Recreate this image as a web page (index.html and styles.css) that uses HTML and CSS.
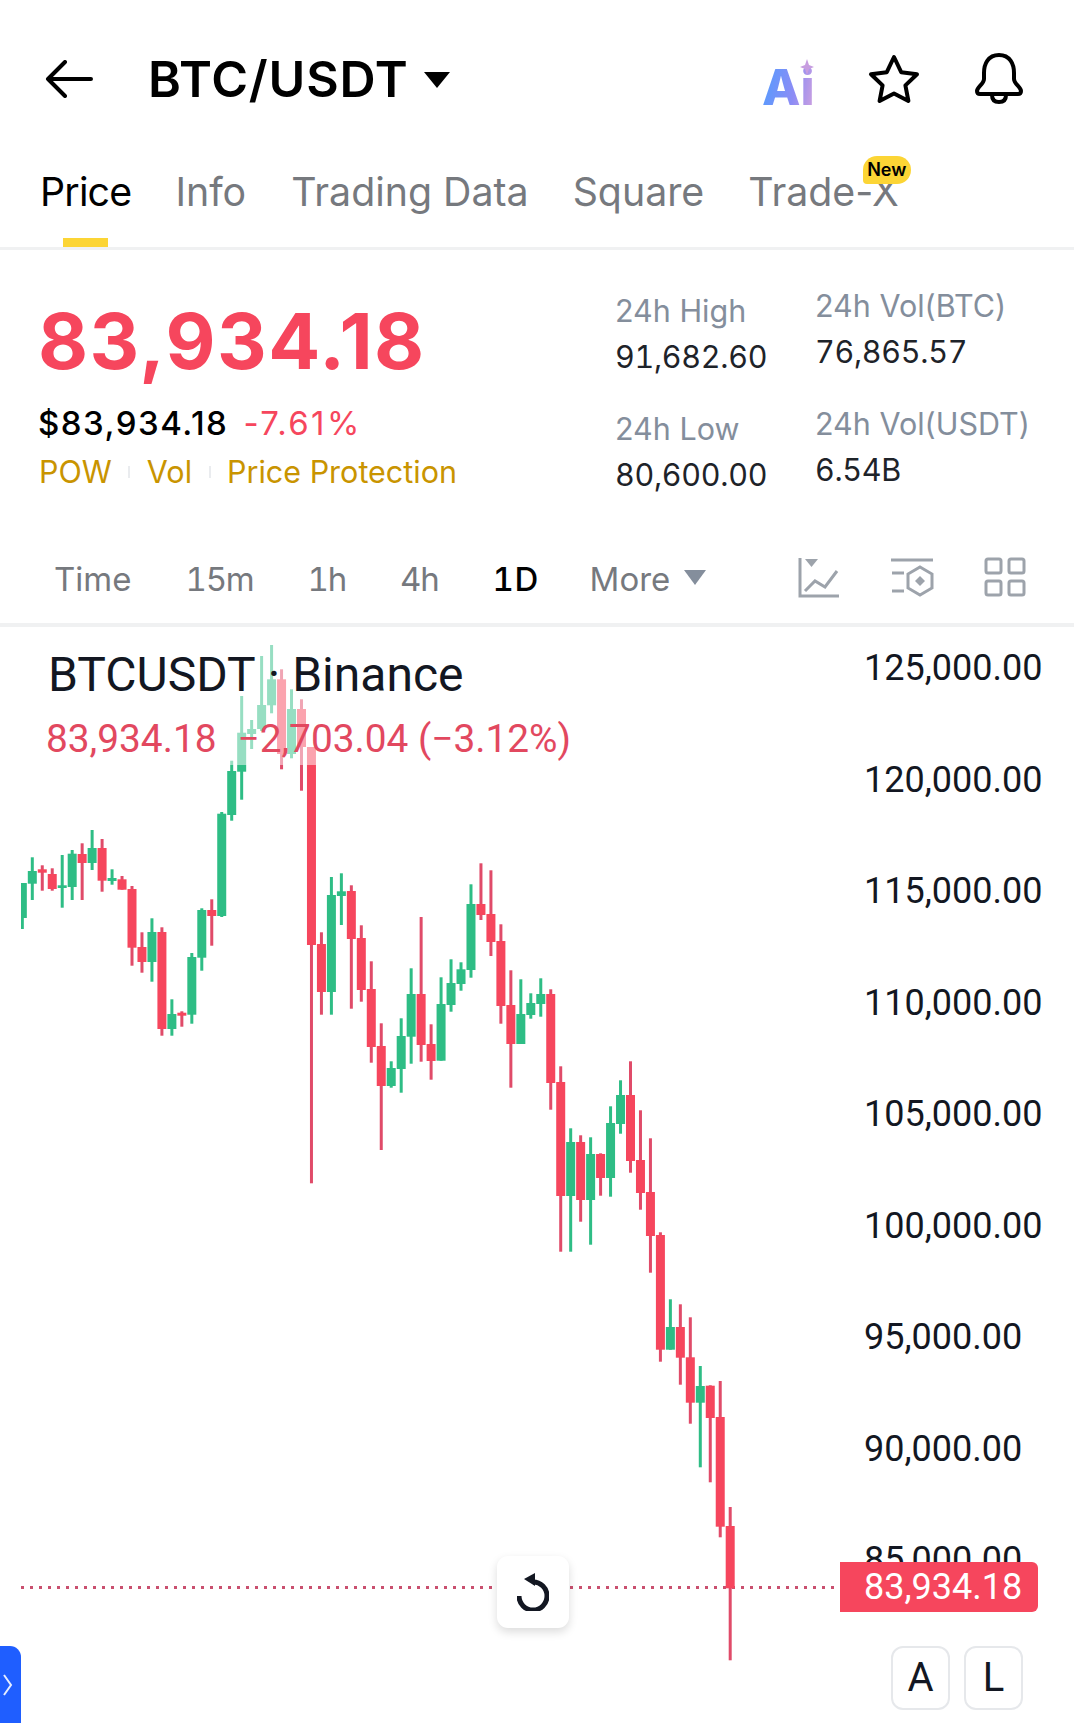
FILE: index.html
```html
<!DOCTYPE html>
<html lang="en">
<head>
    <meta charset="UTF-8">
    <meta name="viewport" content="width=device-width, initial-scale=1.0">
    <title>BTC/USDT</title>
    <link rel="stylesheet" href="styles.css">
</head>
<body>
    <!-- top bar -->
    <div class="topbar">
        <svg class="back" width="48" height="38" viewBox="0 0 48 38"><path d="M46 19H3M20 2L3 19l17 17"/></svg>
        <span class="pair">BTC/USDT</span>
        <span class="pair-caret"></span>
        <div class="top-icons">
            <div class="ai">
                <span class="ai-text">Ai</span>
                <svg class="ai-spark" width="14" height="16" viewBox="0 0 14 16"><path d="M7 0l2 6 5 2-5 2-2 6-2-6-5-2 5-2z"/></svg>
            </div>
            <svg class="top-icon" width="54" height="52" viewBox="0 0 54 52"><path d="M27 4l7.2 15.2L50 21.2 38.4 32.4l3 15.6L27 40.4 12.6 48l3-15.6L4 21.2l15.800-2z"/></svg>
            <svg class="top-icon" width="50" height="52" viewBox="0 0 50 52"><path d="M25 2C14 2 10 11 10 20v6c0 5-7 8-7 12 0 2 1 3 3 3h38c2 0 3-1 3-3 0-4-7-7-7-12v-6C40 11 36 2 25 2zM18 42c0 5 3 7 7 7s7-2 7-7"/></svg>
        </div>
    </div>

    <!-- tabs -->
    <div class="tabs">
        <span class="tab active">Price</span>
        <span class="tab tab-info">Info</span>
        <span class="tab">Trading Data</span>
        <span class="tab">Square</span>
        <span class="tab">Trade-X<em class="badge">New</em></span>
    </div>

    <!-- price and 24h stats -->
    <div class="stats">
        <div class="price-block">
            <div class="big-price">83,934.18</div>
            <div class="sub-price"><span class="usd">$83,934.18</span><span class="change">-7.61%</span></div>
            <div class="tags">
                <span>POW</span><i></i><span>Vol</span><i></i><span>Price Protection</span>
            </div>
        </div>
        <div class="stat-col col-high">
            <div class="stat-label">24h High</div>
            <div class="stat-value">91,682.60</div>
            <div class="stat-label next">24h Low</div>
            <div class="stat-value">80,600.00</div>
        </div>
        <div class="stat-col col-vol">
            <div class="stat-label">24h Vol(BTC)</div>
            <div class="stat-value">76,865.57</div>
            <div class="stat-label next">24h Vol(USDT)</div>
            <div class="stat-value">6.54B</div>
        </div>
    </div>

    <!-- interval bar -->
    <div class="intervals">
        <span>Time</span>
        <span class="num">15m</span>
        <span class="num">1h</span>
        <span class="num">4h</span>
        <span class="current">1D</span>
        <span class="more">More<b class="more-caret"></b></span>
        <div class="tools">
            <svg width="42" height="41" viewBox="0 0 42 41"><path d="M2 1v38h39"/><path d="M7 34l10-10 10 6 12-16"/><path class="solid" d="M7 2h13l-6.500 8z"/></svg>
            <svg width="44" height="40" viewBox="0 0 44 40"><path d="M1 3h42M2 16h12M2 34h12"/><path d="M30 10l12 7v14l-12 7-12-7V17z"/><path class="solid" d="M30 19l5 5-5 5-5-5z"/></svg>
            <svg width="42" height="40" viewBox="0 0 42 40"><rect x="2" y="2" width="15" height="14" rx="2"/><rect x="25" y="2" width="15" height="14" rx="2"/><rect x="2" y="24" width="15" height="14" rx="2"/><rect x="25" y="24" width="15" height="14" rx="2"/></svg>
        </div>
    </div>

    <!-- chart, page y coordinates are used inside the svg -->
    <div class="chart">
        <svg id="candles" class="candles" width="1074" height="1096" viewBox="0 627 1074 1096"></svg>
        <div class="legend">
            <div class="legend-title">BTCUSDT<span class="legend-dot">·</span>Binance</div>
            <div class="legend-values"><span>83,934.18</span><span>−2,703.04 (−3.12%)</span></div>
        </div>
        <div class="axis">
            <span>125,000.00</span>
            <span>120,000.00</span>
            <span>115,000.00</span>
            <span>110,000.00</span>
            <span>105,000.00</span>
            <span>100,000.00</span>
            <span>95,000.00</span>
            <span>90,000.00</span>
            <span>85,000.00</span>
        </div>
        <div class="price-tag">83,934.18</div>
        <div class="reset">
            <svg width="32" height="38" viewBox="0 0 32 38"><path class="arc" d="M16 9a14 14 0 1 1-14 14"/><path d="M7 6L18 0v13z"/></svg>
        </div>
        <div class="side-tab">
            <svg width="10" height="22" viewBox="0 0 10 22"><path d="M1 1l7 10-7 10"/></svg>
        </div>
        <div class="scale-btns">
            <span>A</span>
            <span>L</span>
        </div>
    </div>
    <script src="chart.js"></script>
</body>
</html>
```

FILE: styles.css
```css
*{
    box-sizing: border-box;
}
body{
    margin: 0;
    width: 1074px;
    height: 1723px;
    overflow: hidden;
    background: #fff;
    color: #000;
    font-family: "Inter", "Liberation Sans", sans-serif;
}

/* top bar */
.topbar{
    display: flex;
    align-items: center;
    height: 158px;
    padding-left: 45px;
}
.back{
    fill: none;
    stroke: #000;
    stroke-width: 4;
    stroke-linecap: round;
    stroke-linejoin: round;
}
.pair{
    margin-left: 55px;
    font-size: 50px;
    font-weight: 600;
    letter-spacing: 0.8px;
}
.pair-caret{
    margin: 2px 0 0 15px;
    border-left: 13px solid transparent;
    border-right: 13px solid transparent;
    border-top: 16px solid #000;
}
.top-icons{
    display: flex;
    align-items: center;
    margin-left: auto;
    padding-right: 50px;
    gap: 53px;
}
.top-icon{
    fill: none;
    stroke: #000;
    stroke-width: 4;
    stroke-linejoin: round;
    stroke-linecap: round;
}
.ai{
    position: relative;
    width: 54px;
    height: 52px;
    margin-right: -2px;
}
.ai-text{
    position: absolute;
    left: 0;
    bottom: -12px;
    font-size: 50px;
    font-weight: 800;
    line-height: 1.2;
    background: linear-gradient(100deg, #4f9dff, #8d8cf5 60%, #d6a3dc);
    -webkit-background-clip: text;
    background-clip: text;
    color: transparent;
}
.ai-spark{
    position: absolute;
    top: 6px;
    right: 2px;
    fill: #c79de0;
}

/* tabs */
.tabs{
    display: flex;
    gap: 44px;
    height: 92px;
    padding: 8px 0 0 40px;
    border-bottom: 3px solid #f0f1f2;
    font-size: 39.3px;
    line-height: 52px;
    color: #76797e;
}
.tab{
    position: relative;
    height: 81px;
}
.tab.active{
    color: #000;
    letter-spacing: -0.8px;
}
.tab-info{
    margin-right: 1px;
}
.tab.active::after{
    content: "";
    position: absolute;
    left: 23px;
    bottom: 0;
    width: 45px;
    height: 9px;
    background: #fcd535;
}
.badge{
    position: absolute;
    top: -10px;
    right: -12px;
    width: 48px;
    height: 28px;
    border-radius: 14px 14px 14px 4px;
    background: #fcd535;
    color: #000;
    font-size: 18px;
    font-style: normal;
    font-weight: 600;
    line-height: 28px;
    text-align: center;
}

/* price block */
.stats{
    display: flex;
    height: 285px;
}
.price-block{
    width: 615px;
    padding: 46px 0 0 38px;
}
.big-price{
    height: 90px;
    color: #f6465d;
    font-size: 77px;
    font-weight: 700;
    letter-spacing: 1.5px;
    line-height: 90px;
}
.sub-price{
    display: flex;
    gap: 15px;
    margin-top: 15px;
    font-size: 33px;
    line-height: 44px;
}
.usd{
    font-weight: 500;
    letter-spacing: 1.500px;
}
.change{
    color: #f6465d;
    letter-spacing: 2.4px;
}
.tags{
    display: flex;
    align-items: center;
    margin: 5px 0 0 1px;
    color: #c99400;
    font-size: 30.500px;
    line-height: 44px;
}
.tags i{
    width: 2px;
    height: 12px;
    margin: 0 16.500px;
    background: #eaecef;
}
.stat-col{
    width: 200px;
}
.col-high{
    padding-top: 38px;
}
.col-vol{
    padding-top: 33px;
}
.stat-label,
.stat-value{
    font-size: 30.500px;
    line-height: 46px;
    white-space: nowrap;
}
.stat-label{
    color: #848e9c;
}
.stat-label.next{
    margin-top: 26px;
}
.col-vol .stat-label.next{
    margin-top: 26px;
}
.stat-value{
    color: #1e2329;
    font-variant-numeric: tabular-nums;
    letter-spacing: -0.3px;
}

/* interval bar */
.intervals{
    display: flex;
    align-items: center;
    gap: 54px;
    height: 92px;
    padding: 0 0 1px 54px;
    border-bottom: 4px solid #f0f1f2;
    color: #76797e;
    font-size: 33px;
    font-variant-numeric: tabular-nums;
}
.num{
    letter-spacing: -1.2px;
}
.current{
    color: #000;
    font-weight: 500;
    letter-spacing: 0.4px;
}
.more{
    display: flex;
    align-items: center;
    gap: 14px;
    margin-left: -3px;
}
.more-caret{
    margin-top: -2px;
    border-left: 11px solid transparent;
    border-right: 11px solid transparent;
    border-top: 15px solid #848e9c;
}
.tools{
    display: flex;
    align-items: center;
    gap: 50px;
    margin-left: auto;
    padding: 0 48px 3px 0;
}
.tools svg{
    fill: none;
    stroke: #9da3ab;
    stroke-width: 3;
}
.tools .solid{
    fill: #9da3ab;
    stroke: none;
}

/* chart */
.chart{
    position: relative;
    height: 1096px;
    font-family: "Roboto", "Liberation Sans", sans-serif;
}
.candles{
    position: absolute;
    left: 0;
    top: 0;
}
.legend{
    position: absolute;
    left: 46px;
    top: 8px;
    height: 130px;
    background: rgba(255, 255, 255, 0.5);
}
.legend-title{
    padding-left: 2px;
    color: #131722;
    font-size: 48px;
    line-height: 79px;
    white-space: nowrap;
}
.legend-dot{
    margin: 0 12px;
}
.legend-values{
    display: flex;
    gap: 21px;
    margin-top: 5px;
    color: #e2485f;
    font-size: 38.8px;
    line-height: 40px;
    white-space: nowrap;
}
.axis{
    position: absolute;
    left: 864px;
    top: -14px;
    display: flex;
    flex-direction: column;
    color: #131722;
    font-size: 36px;
}
.axis span{
    height: 111.5px;
    line-height: 111.5px;
}
.price-tag{
    position: absolute;
    left: 840px;
    top: 935px;
    width: 198px;
    height: 50px;
    padding-left: 24px;
    border-radius: 0 6px 6px 0;
    background: #f6465d;
    color: #fff;
    font-size: 36px;
    line-height: 50px;
}
.reset{
    position: absolute;
    left: 497px;
    top: 929px;
    display: flex;
    justify-content: center;
    align-items: center;
    width: 72px;
    height: 72px;
    border-radius: 11px;
    background: #fff;
    box-shadow: 0 4px 10px rgba(0, 0, 0, 0.14);
}
.reset svg{
    fill: #131722;
}
.reset .arc{
    fill: none;
    stroke: #131722;
    stroke-width: 5;
}
.side-tab{
    position: absolute;
    left: 0;
    top: 1019px;
    display: flex;
    align-items: center;
    width: 21px;
    height: 90px;
    padding: 0 0 13px 3px;
    border-radius: 0 11px 11px 0;
    background: #1f5eff;
}
.side-tab svg{
    fill: none;
    stroke: #e6edff;
    stroke-width: 2;
}
.scale-btns{
    position: absolute;
    left: 891px;
    top: 1019px;
    display: flex;
    gap: 14px;
}
.scale-btns span{
    width: 59px;
    height: 64px;
    border: 2px solid #e6e8eb;
    border-radius: 12px;
    color: #131722;
    font-size: 40px;
    line-height: 60px;
    text-align: center;
}
```

FILE: chart.js
```js
// [high, top, bottom, low, up]  values are page y in px
var data = [
    [883, 883, 918, 929, 1],
    [857.3, 871, 883.7, 900, 1],
    [865.3, 869.3, 872.7, 890.7, 0],
    [868.3, 874, 889, 890.7, 0],
    [855, 885.3, 888, 907.7, 1],
    [850, 853.7, 887, 900, 1],
    [843.3, 854, 863, 900, 0],
    [830, 848, 863, 870, 1],
    [839, 848, 880.7, 891.7, 0],
    [869.3, 878, 881, 884.7, 1],
    [876, 879.3, 889.7, 889.7, 0],
    [886, 889, 947.7, 965.7, 0],
    [932.3, 947, 962, 972.7, 0],
    [918.3, 932, 962, 981.7, 1],
    [927.3, 932, 1029, 1035.7, 0],
    [999.3, 1014, 1029, 1035.7, 1],
    [1011.3, 1012.7, 1015.7, 1026.7, 0],
    [953, 957, 1014.7, 1023.7, 1],
    [908.3, 910, 957.7, 970.7, 1],
    [899.3, 910, 916, 945.7, 0],
    [812, 813.7, 916, 917, 1],
    [760.7, 771, 815, 820.7, 1],
    [696, 732.7, 771.7, 799.7, 1],
    [720, 729, 734, 749, 1],
    [656, 705, 729, 731, 1],
    [645, 679.3, 705.3, 713.3, 1],
    [669.3, 679.3, 754, 769.3, 0],
    [689.3, 709, 754, 758.3, 1],
    [699.3, 709, 747, 790.7, 0],
    [747, 747, 945, 1183.3, 0],
    [932.3, 944, 992, 1014.7, 0],
    [877, 895, 992, 1014.7, 1],
    [873.3, 891.3, 896, 925, 1],
    [885.3, 891, 939, 1008.7, 0],
    [925.3, 938, 990, 1001.7, 0],
    [961.3, 989, 1047, 1062.7, 0],
    [1023.3, 1046, 1086, 1150, 0],
    [1061.3, 1068, 1086, 1087.7, 1],
    [1018.3, 1036, 1069, 1092.7, 1],
    [968.3, 994, 1036.7, 1063.7, 1],
    [917, 994, 1045, 1061.7, 0],
    [1024.3, 1044, 1061, 1079.7, 0],
    [977.3, 1004, 1060.7, 1060.7, 1],
    [959.3, 983, 1005, 1011.7, 1],
    [962.3, 969.3, 984, 990.7, 1],
    [884.3, 904, 970, 977.7, 1],
    [863.3, 904, 915, 920, 0],
    [870.3, 914, 942, 956, 0],
    [924.3, 941, 1006, 1023.7, 0],
    [970.3, 1005, 1044, 1087.7, 0],
    [979.3, 1014, 1044, 1044, 1],
    [993.3, 1003, 1015, 1018.7, 1],
    [978.3, 994, 1004, 1016.7, 1],
    [989.3, 994, 1083, 1109.7, 0],
    [1066.3, 1082, 1196, 1251.7, 0],
    [1128.3, 1142, 1196, 1251.7, 1],
    [1135.3, 1142, 1200, 1221.7, 0],
    [1137.3, 1154, 1200, 1244.7, 1],
    [1153.3, 1154, 1178, 1195.7, 0],
    [1106.3, 1123, 1178, 1196.7, 1],
    [1080.3, 1095, 1124, 1133.7, 1],
    [1061.3, 1095, 1161, 1172.7, 0],
    [1110.3, 1160, 1193, 1209.7, 0],
    [1138.3, 1192, 1236, 1272.7, 0],
    [1232.3, 1235, 1349.7, 1361.7, 0],
    [1299.3, 1327, 1349.7, 1349.7, 1],
    [1304.3, 1327, 1357.7, 1384.7, 0],
    [1317.3, 1357.3, 1402.7, 1423.7, 0],
    [1366, 1386, 1402.7, 1467.3, 1],
    [1385.3, 1385.7, 1418, 1482.3, 0],
    [1381, 1417, 1526.7, 1537.3, 0],
    [1507, 1526, 1588.3, 1660.3, 0]
]

var svg = document.getElementById("candles")
var NS = "http://www.w3.org/2000/svg"

function add(tag, attrs) {
    var el = document.createElementNS(NS, tag)
    for (var k in attrs) {
        el.setAttribute(k, attrs[k])
    }
    svg.appendChild(el)
}

// the first candle is cut off at the left edge of the plot
var defs = document.createElementNS(NS, "clipPath")
defs.id = "plot"
var box = document.createElementNS(NS, "rect")
box.setAttribute("x", 21)
box.setAttribute("y", 627)
box.setAttribute("width", 1053)
box.setAttribute("height", 1096)
defs.appendChild(box)
svg.appendChild(defs)

// last price line
add("line", { x1: 21, x2: 840, y1: 1587.500, y2: 1587.500, stroke: "#c9506f", "stroke-width": 3, "stroke-dasharray": "3 6" })

for (var i = 0; i < data.length; i++) {
    var d = data[i]
    var x = 32.3 + (i - 1) * 9.97
    var body = d[4] ? "#2ebd85" : "#f6465d"
    var wick = d[4] ? "#2ebd85" : "#e04b69"
    add("rect", { x: x - 1.5, y: d[0], width: 3, height: d[3] - d[0], fill: wick, "clip-path": "url(#plot)" })
    add("rect", { x: x - 4.5, y: d[1], width: 9, height: d[2] - d[1], fill: body, "clip-path": "url(#plot)" })
}
```
